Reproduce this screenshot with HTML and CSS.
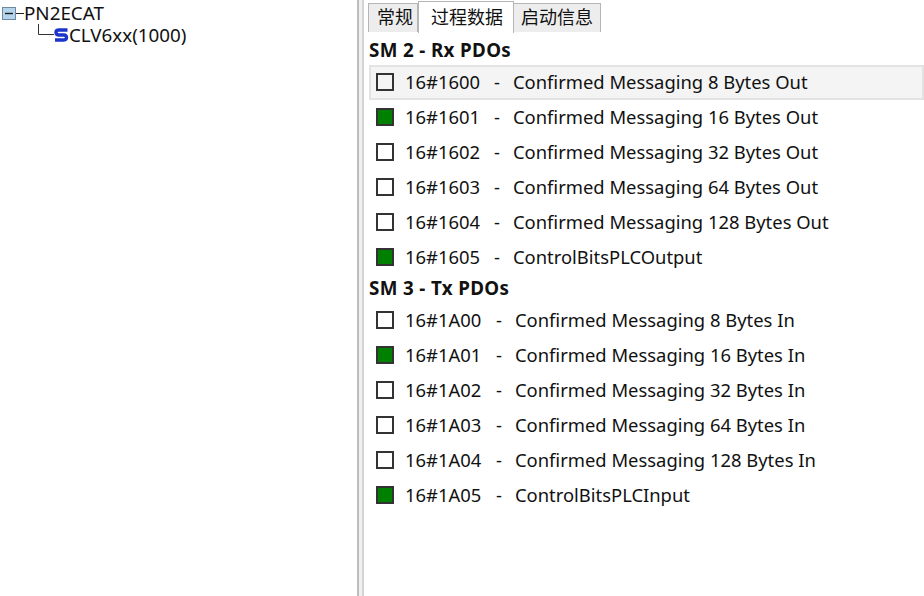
FILE: index.html
```html
<!DOCTYPE html>
<html lang="zh">
<head>
<meta charset="utf-8">
<title>PN2ECAT</title>
<link rel="stylesheet" href="styles.css">
</head>
<body>
<div class="app">
  <aside class="tree">
    <div class="node">
      <svg class="expander" width="14" height="13" viewBox="0 0 14 13"><rect x="0.5" y="0.5" width="13" height="12" fill="#b4d4ec" stroke="#6d8aa3"/><path d="M3 6.5H11" stroke="#1c1c1c" stroke-width="1.4"/></svg>
      <span class="tree-line-h"></span>
      <span>PN2ECAT</span>
    </div>
    <div class="node child">
      <svg class="elbow" width="16" height="14" viewBox="0 0 16 14"><path d="M0.5 0V10.5H16" fill="none" stroke="#333"/></svg>
      <svg class="s-icon" width="15" height="16" viewBox="0 0 15 16"><path d="M13.5 3H5Q2 3 2 5.5T5 8H10Q12.5 8 12.5 10.5T10 13H1" fill="none" stroke="#1c33cc" stroke-width="3.4"/></svg>
      <span>CLV6xx(1000)</span>
    </div>
  </aside>
  <div class="splitter"></div>
  <main class="panel">
    <nav class="tabs">
      <div class="tab">常规</div>
      <div class="tab active">过程数据</div>
      <div class="tab">启动信息</div>
    </nav>
    <h2 class="group first">SM 2 - Rx PDOs</h2>
    <ul class="list">
      <li class="row hover"><span class="box"></span><span class="idx">16#1600</span><span class="dash">-</span><span>Confirmed Messaging 8 Bytes Out</span></li>
      <li class="row"><span class="box on"></span><span class="idx">16#1601</span><span class="dash">-</span><span>Confirmed Messaging 16 Bytes Out</span></li>
      <li class="row"><span class="box"></span><span class="idx">16#1602</span><span class="dash">-</span><span>Confirmed Messaging 32 Bytes Out</span></li>
      <li class="row"><span class="box"></span><span class="idx">16#1603</span><span class="dash">-</span><span>Confirmed Messaging 64 Bytes Out</span></li>
      <li class="row"><span class="box"></span><span class="idx">16#1604</span><span class="dash">-</span><span>Confirmed Messaging 128 Bytes Out</span></li>
      <li class="row"><span class="box on"></span><span class="idx">16#1605</span><span class="dash">-</span><span>ControlBitsPLCOutput</span></li>
    </ul>
    <h2 class="group">SM 3 - Tx PDOs</h2>
    <ul class="list tx">
      <li class="row"><span class="box"></span><span class="idx">16#1A00</span><span class="dash">-</span><span>Confirmed Messaging 8 Bytes In</span></li>
      <li class="row"><span class="box on"></span><span class="idx">16#1A01</span><span class="dash">-</span><span>Confirmed Messaging 16 Bytes In</span></li>
      <li class="row"><span class="box"></span><span class="idx">16#1A02</span><span class="dash">-</span><span>Confirmed Messaging 32 Bytes In</span></li>
      <li class="row"><span class="box"></span><span class="idx">16#1A03</span><span class="dash">-</span><span>Confirmed Messaging 64 Bytes In</span></li>
      <li class="row"><span class="box"></span><span class="idx">16#1A04</span><span class="dash">-</span><span>Confirmed Messaging 128 Bytes In</span></li>
      <li class="row"><span class="box on"></span><span class="idx">16#1A05</span><span class="dash">-</span><span>ControlBitsPLCInput</span></li>
    </ul>
  </main>
</div>
</body>
</html>
```

FILE: styles.css
```css
* { box-sizing: border-box; }
html, body { margin: 0; height: 100%; background: #fff; overflow: hidden; }
body { font: 18.4px/24px "Noto Sans", "Noto Sans CJK SC", sans-serif; color: #111; }
.app { display: flex; height: 596px; }
.tree { width: 357px; padding: 2px 0 0 2px; font-size: 18.8px; }
.node { display: flex; align-items: center; height: 22px; }
.expander { flex: none; }
.tree-line-h { width: 8px; height: 1px; background: #222; }
.child { padding-left: 36px; }
.elbow { flex: none; margin-top: -8px; }
.s-icon { flex: none; }
.splitter { width: 7px; flex: none; border-left: 2px solid #bdbdbd; border-right: 2px solid #d4d4d4; background: #f0f0f0; }
.panel { flex: 1; min-width: 0; padding: 0 0 0 5px; }
.tabs { display: flex; align-items: flex-start; height: 33px; margin-left: -1px; }
.tab { margin-top: 3px; height: 29px; padding: 1px 7px 0; font-size: 18px; background: #ededed; border: 1px solid #b5b5b5; border-bottom: 0; border-left: 0; white-space: nowrap; }
.tab:first-child { border-left: 1px solid #b5b5b5; padding: 1px 4px 0 8px; }
.tab.active { margin-top: 1px; height: 32px; padding: 3px 10px 0 12px; background: #fff; border-left: 1px solid #b5b5b5; }
.group { margin: 0; height: 28px; padding: 1px 0 0 0; font-size: 18.8px; line-height: 24px; font-weight: 700; letter-spacing: 0.35px; }
.group.first { height: 32px; padding-top: 5px; }
.list { list-style: none; margin: 0; padding: 0; }
.row { display: flex; align-items: center; height: 35px; padding: 0 0 1px 7px; white-space: nowrap; }
.row.hover { background: #f4f4f4; border: 2px solid #e3e3e3; padding: 0 0 1px 5px; }
.box { width: 18px; height: 18px; border: 2px solid #333; background: #fff; flex: none; }
.row.hover .box { background: #f4f4f4; }
.box.on { background: #008000; }
.idx { width: 76px; margin-left: 11px; flex: none; }
.dash { width: 32px; flex: none; text-align: center; }
.tx .idx { width: 78px; }
```
